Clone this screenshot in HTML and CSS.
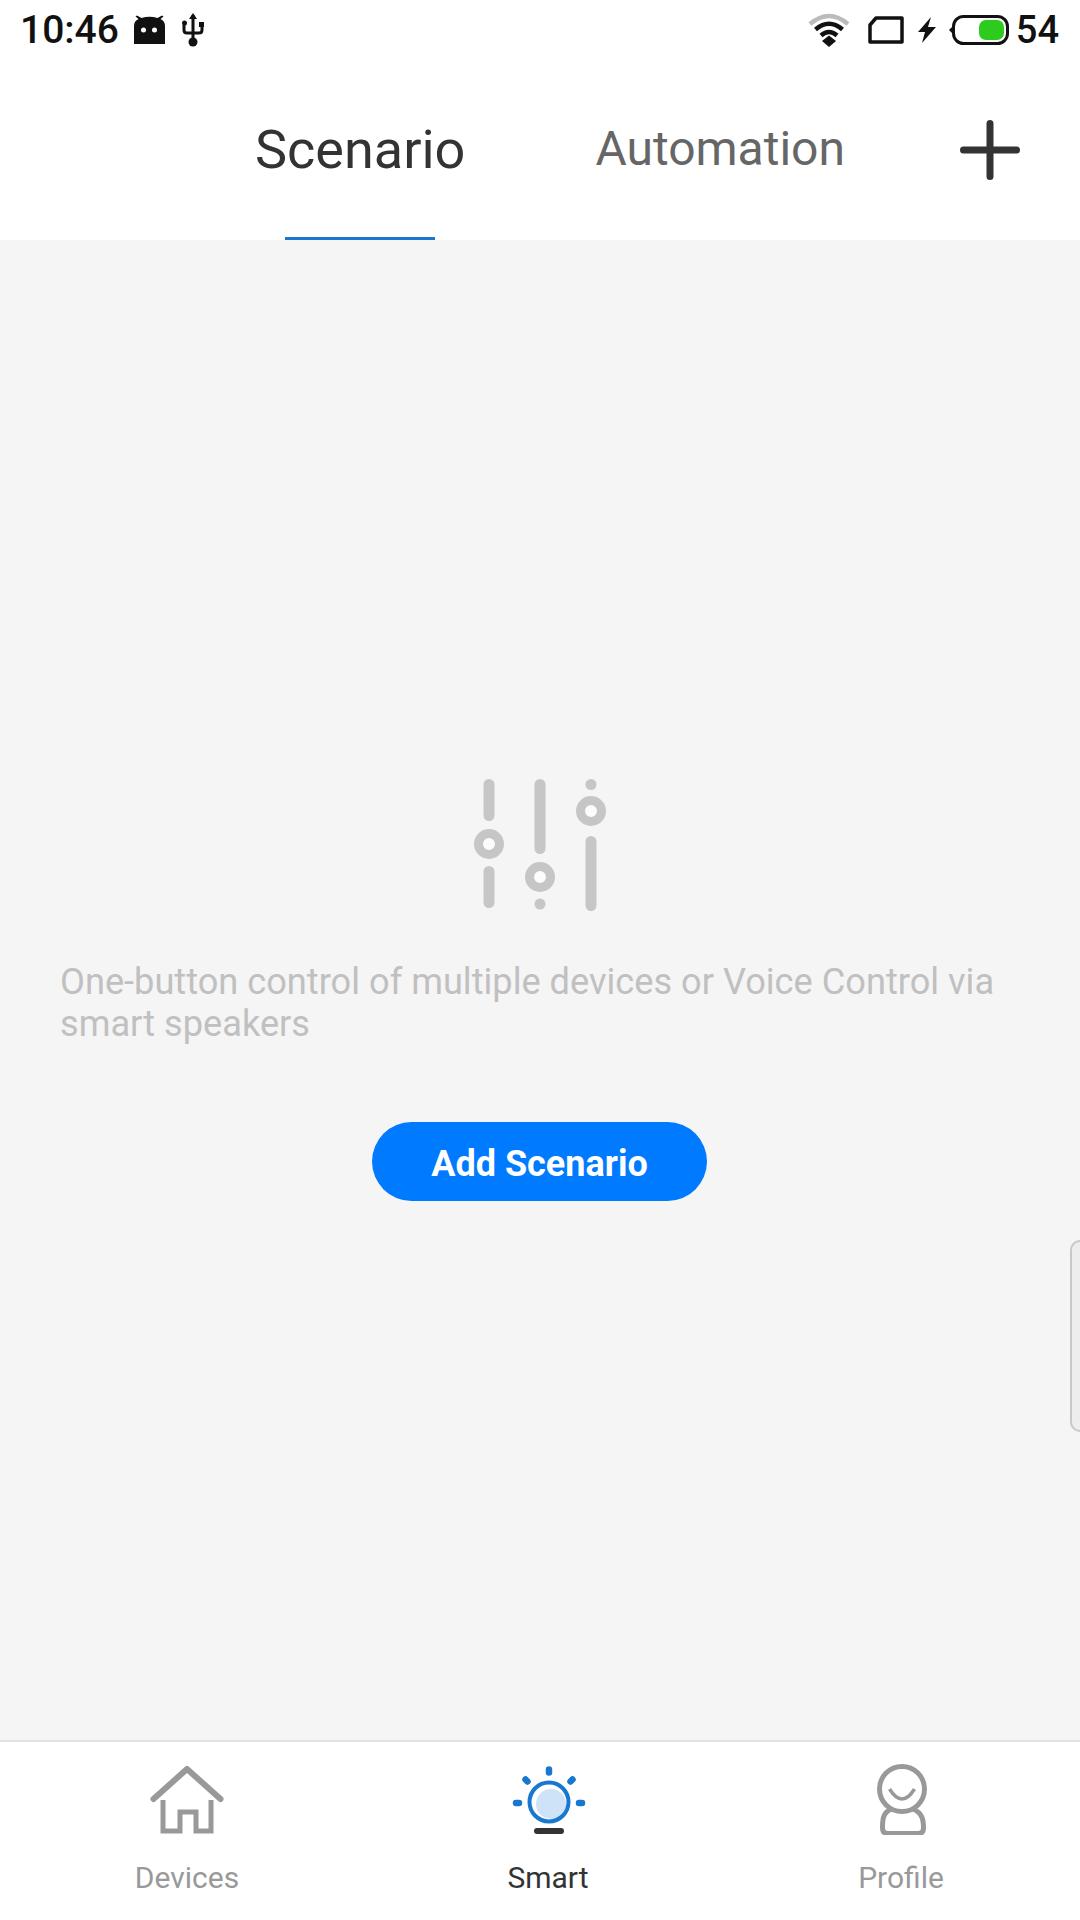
FILE: index.html
```html
<!DOCTYPE html>
<html lang="en">
<head>
   <meta charset="UTF-8">
   <meta name="viewport" content="width=device-width, initial-scale=1.0">
   <title>Smart</title>
   <link rel="stylesheet" href="styles.css">
</head>
<body>
   <div class="status-bar">
       <span class="time">10:46</span>
       <svg class="icon-android" width="31" height="30" viewBox="0 0 31 30">
           <path d="M0 29V11Q0 6 4.500 4L1.500 1.500 3 0.500 7.500 3Q15.500 0.500 23.500 3L28 0.500 29.500 1.500 26.500 4Q31 6 31 11V29Z" fill="#111"/>
           <circle cx="9.500" cy="15" r="2.500" fill="#fff"/>
           <circle cx="20.500" cy="15" r="2.500" fill="#fff"/>
       </svg>
       <svg class="icon-usb" width="22" height="34" viewBox="0 0 22 34">
           <path d="M11 2V28M2 12V17Q2 20 5 20H17Q20 20 20 17V13" fill="none" stroke="#111" stroke-width="3"/>
           <path d="M11 0L15 6H7Z" fill="#111"/>
           <circle cx="11" cy="29" r="4.500" fill="#111"/>
           <circle cx="2.500" cy="10" r="2.500" fill="#111"/>
           <rect x="17" y="9" width="5" height="5" fill="#111"/>
       </svg>
       <div class="status-right">
           <svg class="icon-wifi" width="42" height="34" viewBox="0 0 42 34">
               <path d="M2 11Q21 -5 40 11" fill="none" stroke="#bbb" stroke-width="4.500"/>
               <path d="M7.500 16.500Q21 5 34.500 16.500" fill="none" stroke="#111" stroke-width="4.500"/>
               <path d="M13 22.500Q21 15.500 29 22.500" fill="none" stroke="#111" stroke-width="4.500"/>
               <path d="M14 28L21 22.500 28 28 21 34Z" fill="#111"/>
           </svg>
           <svg class="icon-sim" width="36" height="28" viewBox="0 0 36 28">
               <path d="M8 2H34V26H2V9Z" fill="none" stroke="#111" stroke-width="3.500" stroke-linejoin="round"/>
           </svg>
           <svg class="icon-bolt" width="18" height="26" viewBox="0 0 18 26">
               <path d="M13 0L0 15H7L4 26 18 10H10Z" fill="#111"/>
           </svg>
           <svg class="icon-battery" width="60" height="30" viewBox="0 0 60 30">
               <path d="M0 15L4 11V19Z" fill="#111"/>
               <rect x="4.500" y="1.500" width="54" height="27" rx="10" fill="#fff" stroke="#111" stroke-width="3"/>
               <rect x="30" y="5" width="25" height="20" rx="7" fill="#2ecb1f"/>
           </svg>
           <span class="battery-level">54</span>
       </div>
   </div>

   <div class="header">
       <div class="tab tab-active">Scenario</div>
       <div class="tab">Automation</div>
       <svg class="add-btn" width="60" height="60" viewBox="0 0 60 60">
           <path d="M30 3.500V56.500M3.500 30H56.500" fill="none" stroke="#333" stroke-width="7" stroke-linecap="round"/>
       </svg>
   </div>

   <div class="content">
       <svg class="empty-icon" width="134" height="136" viewBox="0 0 134 136">
           <path d="M16 5.500V36.500M16 92.500V123.500M67 5.500V69.500M118 62.500V126.500" fill="none" stroke="#c6c6c6" stroke-width="11" stroke-linecap="round"/>
           <g fill="#fcfcfc" stroke="#c6c6c6" stroke-width="9">
               <circle cx="16" cy="65" r="10.500"/>
               <circle cx="67" cy="98" r="10.500"/>
               <circle cx="118" cy="32" r="10.500"/>
           </g>
           <circle cx="67" cy="125" r="5.500" fill="#c6c6c6"/>
           <circle cx="118" cy="5.500" r="5.500" fill="#c6c6c6"/>
       </svg>
       <p class="empty-text">One-button control of multiple devices or Voice Control via smart speakers</p>
       <button class="add-scenario">Add Scenario</button>
       <div class="side-handle"></div>
   </div>

   <div class="tabbar">
       <div class="tabbar-item">
           <svg width="76" height="72" viewBox="0 0 76 72">
               <path d="M4.500 36L38 6 71.500 36" fill="none" stroke="#999" stroke-width="6" stroke-linecap="round" stroke-linejoin="round"/>
               <path d="M14 37V68H31V49H47V68H62V37" fill="none" stroke="#999" stroke-width="5"/>
           </svg>
           <span>Devices</span>
       </div>
       <div class="tabbar-item tabbar-active">
           <svg width="76" height="72" viewBox="0 0 76 72">
               <circle cx="41" cy="41" r="15" fill="#cfe3f8"/>
               <circle cx="39" cy="39" r="19.500" fill="none" stroke="#1878d0" stroke-width="4"/>
               <path d="M39 6.500V9.500M15.500 16.500L17.500 18.500M62.500 16.500L60.500 18.500M6 40H9M69 40H72" fill="none" stroke="#1878d0" stroke-width="6.500" stroke-linecap="round"/>
               <path d="M27 68H51" fill="none" stroke="#333" stroke-width="6" stroke-linecap="round"/>
           </svg>
           <span>Smart</span>
       </div>
       <div class="tabbar-item">
           <svg width="76" height="72" viewBox="0 0 76 72">
               <path d="M28 46C20 50 19.500 56 19.500 65Q19.500 70.500 25 70.500H55Q60.500 70.500 60.500 65C60.500 56 59 50 50 46" fill="none" stroke="#999" stroke-width="5"/>
               <circle cx="39" cy="26" r="22.500" fill="#fff" stroke="#999" stroke-width="5"/>
               <path d="M26.500 26Q39 46 51.500 26" fill="none" stroke="#999" stroke-width="3.500"/>
           </svg>
           <span>Profile</span>
       </div>
   </div>
</body>
</html>
```

FILE: styles.css
```css
* {
    margin: 0;
    padding: 0;
    box-sizing: border-box;
}

body {
    width: 1080px;
    height: 1920px;
    display: flex;
    flex-direction: column;
    font-family: Roboto, sans-serif;
    background-color: #f5f5f5;
    overflow: hidden;
}

.status-bar {
    height: 60px;
    display: flex;
    align-items: center;
    padding: 0 21px 0 20px;
    background: white;
    color: #111;
}

.time {
    font-size: 39px;
    font-weight: 500;
    margin-right: 15px;
}

.icon-usb {
    margin-left: 17px;
}

.status-right {
    margin-left: auto;
    display: flex;
    align-items: center;
}

.icon-sim {
    margin-left: 18px;
}

.icon-bolt {
    margin-left: 14px;
}

.icon-battery {
    margin-left: 13px;
}

.battery-level {
    font-size: 38px;
    font-weight: 500;
    margin-left: 7px;
}

.header {
    height: 180px;
    display: flex;
    align-items: flex-start;
    padding: 62px 0 0 255px;
    background: white;
}

.tab {
    position: relative;
    font-size: 48px;
    line-height: 54px;
    color: #666;
    height: 118px;
    margin-right: 130px;
}

.tab-active {
    color: #333;
    font-size: 54px;
    line-height: 56px;
}

.tab-active::after {
    content: "";
    position: absolute;
    left: 30px;
    right: 30px;
    bottom: 0;
    height: 3px;
    background-color: #1878d0;
}

.add-btn {
    margin: -2px 0 0 -15px;
}

.content {
    position: relative;
    flex: 1;
    display: flex;
    flex-direction: column;
    align-items: center;
    padding-top: 539px;
}

.empty-icon {
    flex-shrink: 0;
}

.empty-text {
    width: 100%;
    margin-top: 46px;
    padding: 0 60px;
    font-size: 36.2px;
    line-height: 42px;
    color: #c0c0c0;
}

.add-scenario {
    margin: 77px 1px 0 0;
    width: 335px;
    height: 79px;
    padding-top: 5px;
    border: none;
    border-radius: 40px;
    background-color: #007aff;
    color: white;
    font-family: Roboto, sans-serif;
    font-size: 36px;
    font-weight: 700;
}

.side-handle {
    position: absolute;
    right: -12px;
    top: 1000px;
    width: 22px;
    height: 192px;
    border: 2px solid #c8c8c8;
    border-radius: 10px;
    background-color: #ededed;
}

.tabbar {
    height: 180px;
    display: grid;
    grid-template-columns: 374px 348px 358px;
    background: white;
    border-top: 2px solid #e2e2e2;
}

.tabbar-item {
    display: flex;
    flex-direction: column;
    align-items: center;
    padding-top: 21px;
    font-size: 30px;
    color: #999;
}

.tabbar-item span {
    margin-top: 25px;
}

.tabbar-active {
    color: #333;
}
```
